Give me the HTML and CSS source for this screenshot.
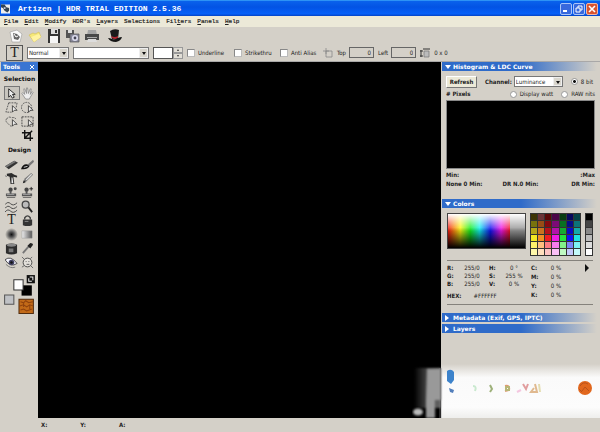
FILE: index.html
```html
<!DOCTYPE html>
<html lang="en">
<head>
<meta charset="utf-8">
<title>Artizen | HDR TRIAL EDITION 2.5.36</title>
<link rel="stylesheet" href="styles.css">
</head>
<body>
<header class="titlebar">
  <svg class="app-icon" viewBox="0 0 10 10"><path fill="#eee" d="M0 0h10v10H0z"/><path fill="#345" d="M0 0h4l2 3 3 1v3l-2 2-3-2-2-3-2-1z"/><path fill="#ccd" d="M3 3h2v2H3z"/></svg>
  <h1>Artizen | HDR TRIAL EDITION 2.5.36</h1>
  <div class="window-buttons">
    <button aria-label="Minimize"><svg viewBox="0 0 10 10"><path d="M2 7h4" stroke="#fff" stroke-width="2"/></svg></button>
    <button aria-label="Restore"><svg viewBox="0 0 10 10"><path d="M4 4V2h4v4H6M2 4h4v4H2z" stroke="#fff" fill="none"/></svg></button>
    <button class="close" aria-label="Close"><svg viewBox="0 0 10 10"><path d="M2 2l6 6M8 2L2 8" stroke="#fff" stroke-width="1.6"/></svg></button>
  </div>
</header>
<nav class="menubar">
  <a href="#"><u>F</u>ile</a><a href="#"><u>E</u>dit</a><a href="#"><u>M</u>odify</a><a href="#">HDR's</a><a href="#"><u>L</u>ayers</a><a href="#">Selections</a><a href="#">Fil<u>t</u>ers</a><a href="#"><u>P</u>anels</a><a href="#"><u>H</u>elp</a>
</nav>
<div class="toolbar">
  <button aria-label="New"><svg viewBox="0 0 14 14"><path d="M1 3l7-2 5 4-2 8-8 0z" fill="#fafafa" stroke="#999" stroke-width=".6"/><path d="M4 4l4 1 3 3-2 3-4-1z" fill="#666"/><path d="M5 5l2 3 2-1" stroke="#fff" fill="none"/></svg></button>
  <button aria-label="Open"><svg viewBox="0 0 14 14"><path d="M1 6l4-2 2 1 4-2 2 5-7 5z" fill="#f5e878" stroke="#d2bd55" stroke-width=".6"/><path d="M3 8l8-3 2 3-7 5z" fill="#fff3a0"/></svg></button>
  <button aria-label="Save"><svg viewBox="0 0 14 14"><path d="M1 0h12v14H1z" fill="#353535"/><path d="M4 0h7v5H4z" fill="#ddd"/><path d="M8 1h2v3H8z" fill="#333"/><path d="M3 7h8v7H3z" fill="#f5f5f5"/></svg></button>
  <button aria-label="Save copy"><svg viewBox="0 0 14 14"><path d="M0 1h8v8H0z" fill="#555"/><path d="M2 1h4v3H2z" fill="#ddd"/><path d="M4 5h9v8H4z" fill="#889" stroke="#555" stroke-width=".7"/><circle cx="9" cy="9" r="3" fill="#dde"/><circle cx="9" cy="9" r="1.4" fill="#445"/></svg></button>
  <button aria-label="Print"><svg viewBox="0 0 14 14"><path d="M3 1h8l1 5H2z" fill="#a5a5a5"/><path d="M0 5h14v6H0z" fill="#484848"/><path d="M2 8h10v1H2z" fill="#aaa"/><path d="M3 10h8l1 3H2z" fill="#ddd"/></svg></button>
  <button class="hat" aria-label="Magic"><svg viewBox="0 0 14 14"><path d="M2 2q4-3 9-1l-1 9H4z" fill="#1b1b1b"/><path d="M3 7q4 2 7 0v2q-3 2-6 0z" fill="#b12630"/><path d="M0 9q2 0 4 1 3 1 6-1 2-1 4-1-1 4-6 5-6 0-8-4z" fill="#151515"/></svg></button>
</div>
<form class="options">
  <button type="button" class="type-tool" aria-label="Text">T</button>
  <span class="drop mode"><select aria-label="Blend mode"><option>Normal</option></select></span>
  <span class="drop font"><select aria-label="Font"><option></option></select></span>
  <span class="spin"><input type="text" aria-label="Size"><span class="steps"><i></i><i class="down"></i></span></span>
  <label class="check underline"><input type="checkbox">Underline</label>
  <label class="check strike"><input type="checkbox">Strikethru</label>
  <label class="check alias"><input type="checkbox">Anti Alias</label>
  <svg class="mini" viewBox="0 0 10 10"><path d="M3 3h6v6H3zM3 0v6M0 3h6" fill="none" stroke="#888" stroke-width=".8"/></svg>
  <label class="field">Top<input type="text" value="0"></label>
  <label class="field">Left<input type="text" value="0"></label>
  <svg class="mini" viewBox="0 0 10 10"><path d="M4 3h5v6H4z" fill="#bbb" stroke="#777" stroke-width=".7"/><path d="M1 2v7M0 8h3M0 3h3M3 1h7" stroke="#333" fill="none"/></svg>
  <span>0 x 0</span>
</form>
<main>
  <aside class="tools">
    <div class="tools-head"><h2>Tools</h2><button aria-label="Close tools"><svg viewBox="0 0 8 8"><path d="M2 2l4 4M6 2L2 6" stroke="#fff"/></svg></button></div>
    <h3>Selection</h3>
    <div class="grid">
      <button class="active" aria-label="Pointer"><svg viewBox="0 0 14 14"><path d="M4 2v9l2-2 2 3 2-1-2-3h3z" fill="#eee" stroke="#222"/></svg></button>
      <button aria-label="Hand"><svg viewBox="0 0 14 14"><path d="M5 13L1 7l1-1 2 2-1-6 1 0 2 5V1h1l1 6 2-5 1 0-1 6 2-3 1 1-3 5-1 2z" fill="#eee" stroke="#777" stroke-width=".7"/></svg></button>
      <button aria-label="Polygon selection"><svg viewBox="0 0 14 14"><path d="M4 2h9M4 2L1 12h6M13 2l-1 5" fill="none" stroke="#555" stroke-dasharray="2 1"/><path d="M8 5v7l2-2 3 0z" fill="#eee" stroke="#222" stroke-width=".8"/></svg></button>
      <button aria-label="Ellipse selection"><svg viewBox="0 0 14 14"><circle cx="6" cy="7" r="5.5" fill="none" stroke="#555" stroke-dasharray="2 1"/><path d="M8 5v7l2-2 3 0z" fill="#eee" stroke="#222" stroke-width=".8"/></svg></button>
      <button aria-label="Lasso"><svg viewBox="0 0 14 14"><path d="M2 4q2-3 5-1 4-1 5 2M2 4q-2 2 0 4l3 3q2 2 3 0" fill="none" stroke="#555" stroke-dasharray="2 1"/><path d="M8 5v7l2-2 3 0z" fill="#eee" stroke="#222" stroke-width=".8"/></svg></button>
      <button aria-label="Rectangle selection"><svg viewBox="0 0 14 14"><path d="M1 2h12v10H1z" fill="none" stroke="#444" stroke-dasharray="2 1"/><path d="M8 5v7l2-2 3 0z" fill="#eee" stroke="#222" stroke-width=".8"/></svg></button>
      <button class="second" aria-label="Crop"><svg viewBox="0 0 14 14"><path d="M4 1v9h9M1 4h9v9M4 10l8-8" fill="none" stroke="#111" stroke-width="1.5"/></svg></button>
    </div>
    <h3>Design</h3>
    <div class="grid">
      <button aria-label="Eraser"><svg viewBox="0 0 14 14"><path d="M0 9l10-6 4 2-10 7z" fill="#333"/><path d="M0 9l10-6 2 1-10 6z" fill="#777"/></svg></button>
      <button aria-label="Brush"><svg viewBox="0 0 14 14"><path d="M6 8l7-6 1 2-6 6z" fill="#777"/><path d="M0 12q2-6 7-5l2 2q-2 4-9 3z" fill="#111"/><path d="M3 10l4-1" stroke="#ddd"/></svg></button>
      <button aria-label="Airbrush"><svg viewBox="0 0 14 14"><path d="M2 2l5-1 3 2 3 1v2l-4-1 1 8H6L5 5 2 4z" fill="#2c2c2c"/><path d="M7 6h1l1 6H7z" fill="#eee"/><path d="M0 4l2 1" stroke="#777"/></svg></button>
      <button aria-label="Pencil"><svg viewBox="0 0 14 14"><path d="M2 12l2-5 7-6 2 2-7 7z" fill="#777"/><path d="M5 8l6-6 1 1-6 6z" fill="#ddd"/><path d="M2 12l1-3 2 2z" fill="#222"/></svg></button>
      <button aria-label="Stamp"><svg viewBox="0 0 14 14"><circle cx="6" cy="4" r="2.3" fill="#444"/><circle cx="11" cy="3" r="1.6" fill="#444"/><path d="M5 5h2v3h5v3H1V8h4zM2 12h9v1H2z" fill="#555"/><path d="M2 9h8" stroke="#aaa"/></svg></button>
      <button aria-label="Add stamp"><svg viewBox="0 0 14 14"><circle cx="6" cy="4" r="2.3" fill="#444"/><path d="M9 3h4M11 1v4" stroke="#222"/><path d="M5 5h2v3h5v3H1V8h4zM2 12h9v1H2z" fill="#555"/><path d="M2 9h8" stroke="#aaa"/></svg></button>
      <button aria-label="Smudge"><svg viewBox="0 0 14 14"><path d="M0 5q3-4 6-1t7-1M0 9q3-4 6-1t7-1M0 13q3-4 6-1t7-1" fill="none" stroke="#444"/></svg></button>
      <button aria-label="Zoom"><svg viewBox="0 0 14 14"><circle cx="5" cy="5" r="3.7" fill="#bbb" stroke="#444" stroke-width="1.4"/><path d="M8 8l4 5" stroke="#222" stroke-width="2"/></svg></button>
      <button class="letter" aria-label="Type">T</button>
      <button aria-label="Lock"><svg viewBox="0 0 14 14"><path d="M4 6V4q3-4 6 0v2" fill="none" stroke="#444" stroke-width="1.5"/><path d="M2 6h10v6q-5 2-10 0z" fill="#333"/><path d="M4 8h4" stroke="#888"/></svg></button>
      <button aria-label="Blur"><svg viewBox="0 0 14 14"><defs><radialGradient id="dot"><stop stop-color="#111"/><stop offset=".4" stop-color="#555"/><stop offset="1" stop-color="#d4d0c8"/></radialGradient></defs><circle cx="7" cy="7" r="7" fill="url(#dot)"/></svg></button>
      <button aria-label="Gradient"><svg viewBox="0 0 14 14"><defs><linearGradient id="ramp"><stop stop-color="#eee"/><stop offset="1" stop-color="#555"/></linearGradient></defs><path d="M1 3h11v8H1z" fill="url(#ramp)" stroke="#999" stroke-width=".5"/></svg></button>
      <button aria-label="Bucket"><svg viewBox="0 0 14 14"><path d="M1 3q6-3 12 0v9q-6 3-12 0z" fill="#2d2d2d"/><ellipse cx="7" cy="3.5" rx="5" ry="1.5" fill="#888"/><path d="M4 7h5v4H4z" fill="#777"/></svg></button>
      <button aria-label="Eyedropper"><svg viewBox="0 0 14 14"><path d="M2 12l7-8" stroke="#777" stroke-width="2"/><path d="M7 4l3-3q3 0 3 2l-3 4z" fill="#222"/></svg></button>
      <button aria-label="Red eye"><svg viewBox="0 0 14 14"><path d="M0 4q6-5 13 4-7 5-13-4z" fill="#f5f5ff" stroke="#444"/><circle cx="7" cy="7" r="3" fill="#446"/><circle cx="7" cy="7" r="1.3" fill="#111"/><path d="M1 9q5 5 10 3" stroke="#777" fill="none"/></svg></button>
      <button aria-label="Shape"><svg viewBox="0 0 14 14"><circle cx="7" cy="7" r="4.7" fill="#e5e2dc" stroke="#444"/><path d="M1 1l3 3M12 1l-2 2M1 12l3-2M10 10l3 3" stroke="#666"/><path d="M5 6h1M8 6h1M6 9h3" stroke="#555"/></svg></button>
    </div>
    <svg class="wells" viewBox="0 0 36 42"><path d="M25 2h8v8h-8z" fill="#111"/><path d="M28 4h3v3M27 5v3h3" stroke="#eee" fill="none"/><path d="M20 12h10v10H20z" fill="#000"/><path d="M12.500 6.500h9v10h-9z" fill="#fff" stroke="#333"/><path d="M3.500 21.500h9v9h-9z" fill="#bfc1c5" stroke="#555"/><path d="M17.500 25.500h14v14h-14z" fill="#c26a18" stroke="#512d10"/><path d="M19 28l3 1 2-2 3 2 4-1M18 32l4-1 3 2 3-2 3 1M19 36l3-1 3 2 5-2M22 29v4M28 31v4" fill="none" stroke="#8f420d"/></svg>
  </aside>
  <section class="canvas" aria-label="Canvas"></section>
  <aside class="panels">
    <h2 class="open">Histogram &amp; LDC Curve</h2>
    <div class="histogram">
      <div class="row channel-row">
        <button class="refresh">Refresh</button>
        <label for="channel"><b>Channel:</b></label>
        <span class="drop channel"><select id="channel"><option>Luminance</option></select></span>
        <label class="radio"><input type="radio" name="unit" checked>8 bit</label>
      </div>
      <div class="row unit-row"><b># Pixels</b><label class="radio"><input type="radio" name="unit">Display watt</label><label class="radio"><input type="radio" name="unit">RAW nits</label></div>
      <div class="plot"></div>
      <div class="stats"><b>Min:</b><b></b><b>:Max</b></div>
      <div class="stats"><b>None 0 Min:</b><b>DR N.0 Min:</b><b>DR Min:</b></div>
    </div>
    <h2 class="open">Colors</h2>
    <div class="colors">
      <div class="pickers">
        <div class="spectrum"></div>
        <div class="swatches">
          <i style="background:#3d3506"></i><i style="background:#6b3438"></i><i style="background:#5a0808"></i><i style="background:#4a0648"></i><i style="background:#063c12"></i><i style="background:#07095c"></i><i style="background:#054348"></i>
          <i style="background:#77720d"></i><i style="background:#984d16"></i><i style="background:#850b10"></i><i style="background:#7c0b77"></i><i style="background:#087021"></i><i style="background:#080c88"></i><i style="background:#0c7479"></i>
          <i style="background:#b5a819"></i><i style="background:#c97320"></i><i style="background:#b6121b"></i><i style="background:#b313aa"></i><i style="background:#16a931"></i><i style="background:#0a0cc2"></i><i style="background:#13aaa9"></i>
          <i style="background:#f3e923"></i><i style="background:#f19022"></i><i style="background:#ef1c22"></i><i style="background:#ed1ce5"></i><i style="background:#24e23c"></i><i style="background:#1012f0"></i><i style="background:#1ce4e4"></i>
          <i style="background:#fff16a"></i><i style="background:#ffc080"></i><i style="background:#fb7d84"></i><i style="background:#f77ded"></i><i style="background:#83f08a"></i><i style="background:#7c83f3"></i><i style="background:#7df1f1"></i>
          <i style="background:#fff8aa"></i><i style="background:#ffe0be"></i><i style="background:#fcc4c4"></i><i style="background:#fac0f5"></i><i style="background:#c0f9c2"></i><i style="background:#c3c8fa"></i><i style="background:#c3fafa"></i>
        </div>
        <div class="swatches grays"><i style="background:#000"></i><i style="background:#444"></i><i style="background:#888"></i><i style="background:#bbb"></i><i style="background:#ddd"></i><i style="background:#fff"></i></div>
      </div>
      <div class="values">
        <dl class="pair rgb"><dt>R:</dt><dd>255/0</dd><dt>G:</dt><dd>255/0</dd><dt>B:</dt><dd>255/0</dd></dl>
        <dl class="pair hsv"><dt>H:</dt><dd>0 °</dd><dt>S:</dt><dd>255 %</dd><dt>V:</dt><dd>0 %</dd></dl>
        <dl class="pair cmyk"><dt>C:</dt><dd>0 %</dd><dt>M:</dt><dd>0 %</dd><dt>Y:</dt><dd>0 %</dd><dt>K:</dt><dd>0 %</dd></dl>
        <button class="more" aria-label="More"></button>
        <dl class="hex"><dt>HEX:</dt><dd>#FFFFFF</dd></dl>
      </div>
    </div>
    <h2 class="closed">Metadata (Exif, GPS, IPTC)</h2>
    <h2 class="closed">Layers</h2>
  </aside>
  <svg class="badge" viewBox="0 0 188 56" preserveAspectRatio="none">
    <defs>
      <linearGradient id="sheet" x2="0" y2="1"><stop stop-color="#fff" stop-opacity="0"/><stop offset=".25" stop-color="#fafafa"/><stop offset=".8" stop-color="#fcfcfc"/><stop offset="1" stop-color="#eeeeec"/></linearGradient>
      <linearGradient id="mist"><stop stop-color="#777" stop-opacity="0"/><stop offset=".5" stop-color="#777"/><stop offset="1" stop-color="#aaa"/></linearGradient>
      <filter id="soft"><feGaussianBlur stdDeviation="1"/></filter>
      <filter id="faint"><feGaussianBlur stdDeviation=".5"/></filter>
    </defs>
    <path d="M29 2h159v54H29z" fill="url(#sheet)"/>
    <path d="M2 6h27v40H2z" fill="url(#mist)" opacity=".6" filter="url(#soft)"/>
    <path d="M15 7h14v31h-6v18h-9V39z" fill="#999" filter="url(#soft)"/>
    <ellipse cx="6" cy="50" rx="5" ry="3.500" fill="#bbb" filter="url(#soft)"/>
    <path d="M27 6h3v50h-3z" fill="#888" opacity=".3"/>
    <g filter="url(#faint)"><path d="M35 9q4-3 7 1v8l-3 4-4-3z" fill="#3c83cb"/><path d="M37 26l5 2-1 3-3-1z" fill="#527fbb"/></g>
    <g fill="none" stroke-width="2" opacity=".75" filter="url(#faint)">
      <path d="M61 24q4 0 2 5" stroke="#b9e3c0"/><path d="M78 23l2 4-2 3" stroke="#7f9950"/><path d="M93 24q5-1 4 4l-4 1" stroke="#d67a45"/><path d="M94 25h3v3h-3z" stroke="#a3a04c"/><path d="M105 30l4-2" stroke="#f2b6d7"/><path d="M111 22l3 5 2-5" stroke="#d97f80"/><path d="M123 22l2 8h-6l3-4" stroke="#d8a46c"/><path d="M127 22l1 8" stroke="#ddd49a"/>
    </g>
    <circle cx="173" cy="26" r="7" fill="#e1671d"/><path d="M168 24q3-5 8-2M170 29l3-4 4 4M167 27l3 3" stroke="#b9521b" fill="none"/>
  </svg>
</main>
<footer><span>X:</span><span>Y:</span><span>A:</span></footer>
</body>
</html>
```
FILE: styles.css
```css
*, *::before, *::after { box-sizing: border-box; }
body {
  margin: 0;
  height: 100vh;
  display: flex;
  flex-direction: column;
  overflow: hidden;
  background: #d4d0c8;
  color: #222;
  font: 6px/8px "DejaVu Sans Condensed", "DejaVu Sans", sans-serif;
}
h1, h2, h3, dl, dd { margin: 0; }
button, input, select { margin: 0; padding: 0; border: 0; border-radius: 0; font: inherit; color: inherit; background: none; }
svg { display: block; }
a { color: inherit; text-decoration: none; }

.titlebar {
  height: 16px;
  flex: none;
  display: flex;
  align-items: center;
  gap: 8px;
  padding: 0 2px 0 1px;
  border-top: 1px solid #2d92f5;
  background: linear-gradient(#0a62ec, #0353e4 40%, #0560f8 85%, #0442c4);
}
.app-icon { width: 9px; height: 10px; }
.titlebar h1 { flex: 1; color: #fff; font: bold 8px/10px "Liberation Mono", monospace; }
.window-buttons { display: flex; gap: 1px; }
.window-buttons button { width: 12px; height: 12px; border: 1px solid #a9c4f8; border-radius: 2px; background: #3768dd; }
.window-buttons .close { background: #d9532f; border-color: #efb5a5; }

.menubar {
  height: 11px;
  flex: none;
  display: flex;
  align-items: center;
  gap: 6px;
  padding-left: 4px;
  background: #ece9d8;
  font: 6px/10px "Liberation Mono", monospace;
  -webkit-text-stroke: 0.2px #222;
}

.toolbar { height: 17px; flex: none; display: flex; align-items: center; gap: 5px; padding-left: 9px; }
.toolbar button { width: 14px; height: 14px; }
.toolbar .hat { margin-left: 4px; }

.options { height: 18px; flex: none; display: flex; align-items: center; gap: 4px; padding-left: 6px; border-bottom: 1px solid #a9a8a8; }
.type-tool { width: 17px; height: 16px; border: 1px solid #555; font: 14px/14px "Liberation Serif", serif; }
.drop { position: relative; display: block; height: 12px; border: 1px solid #777; background: #fff; }
.drop select { display: block; width: 100%; height: 100%; padding-left: 1px; appearance: none; }
.drop::before { content: ""; position: absolute; inset: 0 0 0 auto; width: 9px; background: #d9d6cd; border: 1px solid #eee; pointer-events: none; }
.drop::after { content: ""; position: absolute; right: 2px; top: 4px; border: 2px solid transparent; border-top: 3px solid #111; border-bottom: 0; pointer-events: none; }
.mode { width: 42px; }
.font { width: 76px; }
.spin { display: flex; width: 30px; height: 12px; }
.spin input { width: 20px; border: 1px solid #555; background: #fff; }
.steps { flex: 1; display: grid; }
.steps i { position: relative; border: 1px solid #999; background: #e1ded6; }
.steps i::after { content: ""; position: absolute; left: 3px; top: 1px; border: 1px solid transparent; border-bottom: 2px solid #333; border-top: 0; }
.steps .down::after { border-top: 2px solid #333; border-bottom: 0; }
.check { display: flex; align-items: center; gap: 3px; }
.check input { width: 8px; height: 8px; appearance: none; background: #fff; border: 1px solid #bbb; border-top-color: #888; border-left-color: #888; }
.underline { width: 43px; }
.strike { width: 42px; }
.alias { width: 39px; }
.mini { width: 10px; height: 10px; }
.field { display: flex; align-items: center; gap: 3px; }
.field input { width: 25px; height: 11px; padding-right: 2px; border: 1px solid #666; text-align: right; }

main { position: relative; flex: 1; min-height: 0; display: flex; }
.tools { width: 38px; flex: none; padding-left: 1px; }
.tools-head { display: flex; align-items: center; justify-content: space-between; height: 9px; padding: 0 2px; background: #3975d2; color: #fff; }
h2 { font: bold 6px/9px "DejaVu Sans", sans-serif; }
.tools-head button { width: 8px; height: 8px; }
.tools h3 { padding: 4px 0 3px; font: bold 6px/8px "DejaVu Sans", sans-serif; text-align: center; color: #111; }
.grid { display: grid; grid-template-columns: 16px 16px; grid-auto-rows: 14px; justify-content: center; }
.grid button { display: grid; place-items: center; }
.grid svg { width: 13px; height: 13px; }
.grid .active { border: 1px solid #777; background: #c8c5be; }
.grid .second { grid-column: 2; }
.grid .letter { font: 14px/14px "Liberation Serif", serif; }
.wells { width: 100%; margin-top: 4px; }

.canvas { flex: 1; background: #000; }

.panels { width: 159px; flex: none; padding-left: 1px; }
.panels h2 { display: flex; align-items: center; gap: 2px; height: 9px; margin-bottom: 2px; padding-left: 3px; color: #fff; background: linear-gradient(90deg, #2f6bc9 50%, #d4d0c8 98%); }
.panels h2::before { content: ""; width: 6px; border: 3px solid transparent; border-top: 4px solid #fff; border-bottom: 0; }
.panels .closed::before { border: 3px solid transparent; border-left: 4px solid #fff; border-right: 0; }
.histogram { height: 126px; padding: 3px 5px 0 4px; }
.row { display: flex; align-items: center; gap: 8px; }
.channel-row { height: 11px; }
.unit-row { height: 10px; margin: 2px 0 1px; }
.unit-row b { margin-right: auto; }
.refresh { width: 31px; height: 12px; border: 1px solid #777; border-top-color: #fff; border-left-color: #fff; background: #ece9d8; font-weight: bold; }
.channel { width: 49px; height: 11px; margin-left: -6px; }
.radio { display: flex; align-items: center; gap: 3px; }
.radio input { width: 7px; height: 7px; appearance: none; border: 1px solid #999; border-radius: 50%; background: #fff; }
.radio input:checked { background: radial-gradient(circle, #111 35%, #fff 45%); }
.plot { height: 69px; margin-bottom: 2px; background: #000; border: 1px solid #888; }
.stats { display: grid; grid-template-columns: 1fr auto 1fr; height: 8px; margin-bottom: 1px; }
.stats b:last-child { text-align: right; }

.colors { padding: 3px 7px 0 5px; height: 103px; }
.pickers { display: flex; gap: 4px; align-items: flex-start; height: 47px; }
.spectrum {
  flex: 1;
  height: 36px;
  border: 1px solid #444;
  background:
    linear-gradient(transparent 40%, #000),
    linear-gradient(#fff, transparent 50%),
    linear-gradient(90deg, transparent 81%, #999 81%),
    linear-gradient(90deg, #f21a12, #fbf514 16%, #15ee21 29%, #14eff0 41%, #1115f2 55%, #ee19e8 69%, #f1151c 81%);
}
.swatches { display: grid; grid-template-columns: repeat(7, 1fr); grid-auto-rows: 6px; gap: 1px; width: 51px; padding: 1px; background: #333; }
.grays { grid-template-columns: 1fr; width: 8px; }
.values { display: grid; grid-template-columns: 42px 42px 42px 1fr; padding: 3px 0 4px; border: solid #85827c; border-width: 1px 0; }
.pair { display: grid; grid-template-columns: 12px 26px; grid-auto-rows: 8px; align-content: start; }
dt { font-weight: bold; }
dd { text-align: center; }
.cmyk { grid-auto-rows: 9px; grid-row: 1 / 3; grid-column: 3; }
.more { width: 4px; height: 8px; border: 4px solid transparent; border-left-color: #111; border-right: 0; margin-left: 12px; grid-column: 4; grid-row: 1; }
.hex { display: flex; gap: 12px; grid-column: 1 / 3; padding-top: 3px; }
.badge { position: absolute; right: 0; bottom: 0; width: 188px; height: 56px; }
footer { height: 14px; flex: none; display: flex; align-items: center; gap: 33px; padding-left: 41px; font-weight: bold; }
```
